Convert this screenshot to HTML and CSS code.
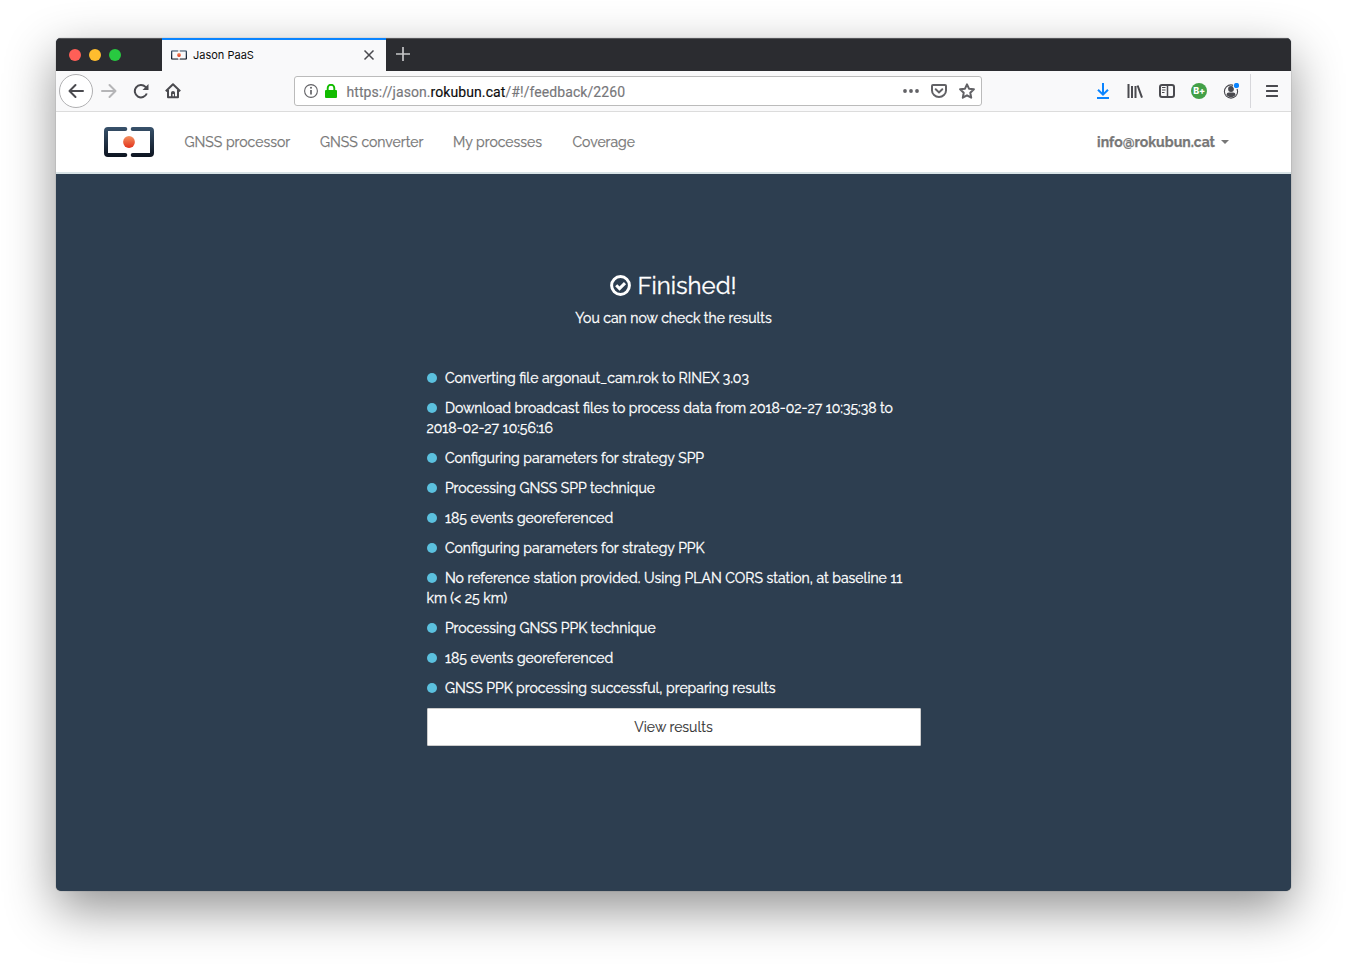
FILE: index.html
```html
<!DOCTYPE html>
<html lang="en">
<head>
<meta charset="utf-8">
<title>Jason PaaS</title>
<link rel="stylesheet" href="styles.css">
</head>
<body>
<svg class="defs" width="0" height="0" aria-hidden="true">
  <defs>
    <linearGradient id="frame" gradientUnits="userSpaceOnUse" x1="0" y1="0" x2="0" y2="30"><stop offset="0" stop-color="#38526b"/><stop offset="1" stop-color="#0d1420"/></linearGradient>
    <linearGradient id="dot" x1="0" y1="0" x2="0" y2="1"><stop offset="0" stop-color="#f2905f"/><stop offset="1" stop-color="#e3331c"/></linearGradient>
    <symbol id="logo" viewBox="0 0 50 30"><path d="M21.300 2H4Q2 2 2 4V26Q2 28 4 28H21.300M28.700 2H46Q48 2 48 4V26Q48 28 46 28H28.700" fill="none" stroke="url(#frame)" stroke-width="4" stroke-linecap="round"/><circle cx="25" cy="15" r="5.900" fill="url(#dot)"/></symbol>
  </defs>
</svg>
<div class="window">
  <header class="titlebar">
    <div class="lights"><i class="red"></i><i class="yellow"></i><i class="green"></i></div>
    <div class="tab">
      <svg class="favicon" viewBox="0 0 50 30"><use href="#logo" width="50" height="30"/></svg>
      <span class="tab-title">Jason PaaS</span>
      <svg class="close" width="12" height="12" viewBox="0 0 12 12"><path d="M1.500 1.500l9 9M10.500 1.500l-9 9" stroke="#4a4a4f" stroke-width="1.500" fill="none"/></svg>
    </div>
    <svg class="plus" width="14" height="14" viewBox="0 0 14 14"><path d="M7 0v14M0 7h14" stroke="#c6c6c8" stroke-width="1.700"/></svg>
  </header>
  <div class="toolbar">
    <div class="back"><svg width="16" height="16" viewBox="0 0 16 16"><path d="M15 8H1.500M7.500 2L1.500 8l6 6" class="ico" stroke-linecap="round" stroke-linejoin="round"/></svg></div>
    <div class="slot"><svg width="16" height="16" viewBox="0 0 16 16"><path d="M1 8h13.500M8.500 2l6 6-6 6" class="ico faded" stroke-linecap="round" stroke-linejoin="round"/></svg></div>
    <div class="slot"><svg width="16" height="16" viewBox="0 0 16 16"><path d="M13.800 10.500A6.200 6.200 0 1 1 12.500 3.900L14 5.400" class="ico"/><path d="M15.500 1v6h-6z" fill="#4a4a4f"/></svg></div>
    <div class="slot"><svg width="16" height="16" viewBox="0 0 16 16"><path d="M.8 8.200L8 1.200l7.200 7M3 7v7.200h10V7" class="ico" stroke-linejoin="round"/><path d="M6 14V9.800Q6 8 8 8t2 1.800V14H8.900v-3H7.600v3z" fill="#4a4a4f"/></svg></div>
    <div class="urlbar">
      <svg width="14" height="14" viewBox="0 0 14 14"><circle cx="7" cy="7" r="6.400" fill="none" stroke="#626266" stroke-width="1.100"/><path d="M7 6v4.500" stroke="#626266" stroke-width="1.700"/><circle cx="7" cy="3.800" r="1" fill="#626266"/></svg>
      <svg class="lock" width="12" height="14" viewBox="0 0 12 14"><path d="M2.700 7V4a3.300 3.300 0 0 1 6.600 0v3" fill="none" stroke="#12bc00" stroke-width="1.900"/><rect y="6" width="12" height="8" rx="1" fill="#12bc00"/></svg>
      <span class="url">https://jason.<b>rokubun.cat</b>/#!/feedback/2260</span>
      <svg class="dots" width="16" height="16" viewBox="0 0 16 16"><g fill="#626266"><circle cx="2" cy="8" r="1.900"/><circle cx="8" cy="8" r="1.900"/><circle cx="14" cy="8" r="1.900"/></g></svg>
      <svg width="16" height="16" viewBox="0 0 16 16"><path d="M2 2h12q1 0 1 1v4.500a7 6.500 0 0 1-14 0V3q0-1 1-1z" class="ico grey"/><path d="M4.700 6.200L8 9.400l3.300-3.200" class="ico grey" stroke-linecap="round"/></svg>
      <svg width="16" height="16" viewBox="0 0 16 16"><path d="M8 1.300l2 4.400 4.900.6-3.600 3.400.9 5L8 12.300l-4.200 2.400.9-5L1.100 6.300 6 5.700z" class="ico grey" stroke-linejoin="round"/></svg>
    </div>
    <div class="tools">
      <div class="slot"><svg width="14" height="16" viewBox="0 0 14 16"><path d="M7 0v11.500M2 6.700l5 5 5-5M1 15h12" fill="none" stroke="#0a84ff" stroke-width="2"/></svg></div>
      <div class="slot"><svg width="16" height="16" viewBox="0 0 16 16"><path d="M1.500 1v14M5 3v12M8.500 3v12M10.600 2.500L15 14.600" class="ico"/></svg></div>
      <div class="slot"><svg width="16" height="16" viewBox="0 0 16 16"><rect x="1" y="2" width="14" height="12" rx="2" class="ico"/><path d="M8.500 2v12" class="ico thin"/><path d="M3 4.500h3.500M3 7h3.500M3 9.500h2.500" stroke="#4a4a4f" stroke-width="1"/></svg></div>
      <div class="slot"><span class="badge">B+</span></div>
      <div class="slot"><svg width="16" height="16" viewBox="0 0 16 16"><circle cx="8" cy="8.500" r="6.600" fill="none" stroke="#4a4a4f" stroke-width="1.100"/><circle cx="8" cy="6" r="2.900" fill="#4a4a4f"/><path d="M3.400 11.800q.3-2.300 2.400-2.300h4.400q2.100 0 2.400 2.300A5.500 5.500 0 0 1 3.400 11.800z" fill="#4a4a4f"/><circle cx="13.500" cy="2.500" r="3.500" fill="#f9f9fa"/><circle cx="13.500" cy="2.500" r="2.600" fill="#0a84ff"/></svg></div>
    </div>
    <div class="menu"><svg width="12" height="12" viewBox="0 0 12 12"><path d="M.8 1h10.400M.8 6h10.400M.8 11h10.400" class="ico" stroke-linecap="round"/></svg></div>
  </div>
  <nav class="nav">
    <svg class="brand" width="50" height="30"><use href="#logo"/></svg>
    <a class="n1">GNSS processor</a><a class="n2">GNSS converter</a><a class="n3">My processes</a><a class="n4">Coverage</a>
    <span class="user">info@rokubun.cat</span><i class="caret"></i>
  </nav>
  <main class="page">
    <h3 class="title"><svg width="21" height="21" viewBox="0 0 21 21"><circle cx="10.500" cy="10.500" r="8.900" fill="none" stroke="#fff" stroke-width="3"/><path d="M6.200 10.300l3.300 3.300 5.500-5.500" fill="none" stroke="#fff" stroke-width="3"/></svg><span>Finished!</span></h3>
    <p class="sub">You can now check the results</p>
    <ul class="log">
      <li><i></i><span>Converting file argonaut_cam.rok to RINEX 3.03</span></li>
      <li><i></i><span>Download broadcast files to process data from 2018-02-27 10:35:38 to<br>2018-02-27 10:56:16</span></li>
      <li><i></i><span>Configuring parameters for strategy SPP</span></li>
      <li><i></i><span>Processing GNSS SPP technique</span></li>
      <li><i></i><span>185 events georeferenced</span></li>
      <li><i></i><span>Configuring parameters for strategy PPK</span></li>
      <li><i></i><span>No reference station provided. Using PLAN CORS station, at baseline 11<br>km (&lt; 25 km)</span></li>
      <li><i></i><span>Processing GNSS PPK technique</span></li>
      <li><i></i><span>185 events georeferenced</span></li>
      <li><i></i><span>GNSS PPK processing successful, preparing results</span></li>
    </ul>
    <button class="results">View results</button>
  </main>
</div>
</body>
</html>
```
FILE: styles.css
```css
* { box-sizing: border-box; }
html, body { margin: 0; height: 965px; overflow: hidden; background: #fff; }
body { padding: 38px 56px 0; font: 14px/20px Raleway, Lato, sans-serif; }
svg { display: block; flex: none; }
.defs { position: absolute; }
.window { width: 1235px; height: 853px; border-radius: 5px; overflow: hidden; display: flex; flex-direction: column; background: #2d3e50; box-shadow: 0 0 1px rgba(0,0,0,.6), 0 18px 50px rgba(0,0,0,.43); }
.titlebar { height: 33px; flex: none; background: #2b2c30; display: flex; align-items: center; border-top: 1px solid #55565a; }
.lights { width: 106px; padding-left: 13px; display: flex; gap: 8px; }
.lights i { width: 12px; height: 12px; border-radius: 50%; }
.red { background: #ff5f57; }
.yellow { background: #ffbd2e; }
.green { background: #28c940; }
.tab { width: 224px; height: 33px; margin-top: -1px; padding: 0 11px 0 9px; background: #f9f9fa; border-top: 2px solid #0a84ff; display: flex; align-items: center; }
.favicon { width: 16px; height: 10px; margin-bottom: 2px; }
.tab-title { margin: 0 0 2px 6px; flex: 1; font: 11px/16px Inter, sans-serif; color: #0c0c0d; }
.close { margin-bottom: 2px; }
.plus { margin: 0 0 2px 10px; }
.toolbar { height: 41px; flex: none; background: #f9f9fa; border-bottom: 1px solid #dcdcdc; display: flex; align-items: center; padding-left: 3px; }
.ico { fill: none; stroke: #4a4a4f; stroke-width: 2; }
.thin { stroke-width: 1.5; }
.faded { stroke: #b5b5b7; }
.grey { stroke: #626266; }
.back { width: 34px; height: 34px; border-radius: 50%; background: #fff; border: 1px solid #b0b0b2; display: flex; align-items: center; justify-content: center; }
.slot { width: 32px; display: flex; justify-content: center; }
.urlbar { width: 688px; height: 30px; margin-left: 105px; padding: 0 6px 0 9px; background: #fff; border: 1px solid #bbb; border-radius: 3px; display: flex; align-items: center; gap: 12px; }
.lock { margin-left: -5px; }
.url { margin-left: -2.5px; padding-top: 2px; flex: 1; font: 14px/20px Roboto, sans-serif; color: #77777a; letter-spacing: .08px; white-space: nowrap; -webkit-text-stroke: .15px; }
.url b { font-weight: 400; color: #0c0c0d; }
.tools { margin-left: 105px; display: flex; align-items: center; }
.badge { width: 16px; height: 16px; border-radius: 50%; background: #43a047; color: #fff; font: 800 9px/16px Inter, sans-serif; letter-spacing: -.3px; text-align: center; }
.menu { margin-left: 3px; padding-left: 15px; height: 34px; border-left: 1px solid #d7d7db; display: flex; align-items: center; }
.nav { height: 62px; flex: none; background: #fff; border-bottom: 2px solid #d8e3e6; display: flex; align-items: center; padding: 0 62px 0 48px; color: #777; -webkit-text-stroke: .25px; }
.brand { margin-right: 30.5px; }
.nav a { margin-right: 30px; white-space: nowrap; }
.n1 { width: 105.5px; }
.n2 { width: 103px; }
.n3 { width: 89.500px; }
.n4 { width: 63px; }
.user { margin-left: auto; font-weight: 700; }
.caret { margin-left: 6px; border: 4px solid transparent; border-top-color: #777; border-bottom: 0; }
.page { flex: 1; width: 494px; margin: 0 auto; padding-top: 98px; color: #fff; -webkit-text-stroke: .3px; }
.title { margin: 0 0 10px; height: 26px; display: flex; align-items: center; justify-content: center; gap: 6px; font-size: 24px; font-weight: 400; }
.title span { padding-top: 2px; }
.sub { margin: 0 0 40px; text-align: center; }
.log { margin: 0; padding: 0; list-style: none; white-space: nowrap; }
.log li { margin-bottom: 10px; }
.log i { display: inline-block; width: 10px; height: 10px; border-radius: 50%; background: #5bc0de; margin-right: 8.400px; }
.results { width: 494px; height: 38px; display: block; padding: 0; background: #fff; border: 1px solid #ccc; border-radius: 1px; font: inherit; color: #333; -webkit-text-stroke: .15px; }
```
